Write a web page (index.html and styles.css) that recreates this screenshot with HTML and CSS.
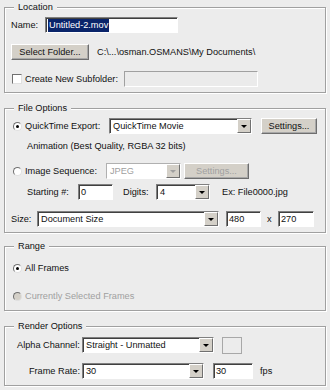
FILE: index.html
```html
<!DOCTYPE html>
<html>
<head>
    <title>Render Video</title>
    <link rel="stylesheet" href="styles.css">
</head>
<body>
    <div class="dialog">
        <!-- Location -->
        <fieldset class="group group-location">
            <legend>Location</legend>
            <div class="group-body">
                <div class="row">
                    <span class="lbl w-name">Name:</span>
                    <div class="field name-field"><span class="selected">Untitled-2.mov</span></div>
                </div>
                <div class="row">
                    <button class="btn folder-btn">Select Folder...</button>
                    <span class="path">C:\...\osman.OSMANS\My Documents\</span>
                </div>
                <div class="row">
                    <span class="check"></span>
                    <span class="lbl w-sub">Create New Subfolder:</span>
                    <div class="field disabled sub-field"></div>
                </div>
            </div>
        </fieldset>

        <!-- File Options -->
        <fieldset class="group group-file">
            <legend>File Options</legend>
            <div class="group-body">
                <div class="row">
                    <span class="radio checked"></span>
                    <span class="lbl w-qt">QuickTime Export:</span>
                    <div class="combo qt-combo"><span class="combo-text">QuickTime Movie</span><span class="combo-btn"></span></div>
                    <button class="btn qt-btn">Settings...</button>
                </div>
                <div class="row text-row">
                    <span class="note">Animation (Best Quality, RGBA 32 bits)</span>
                </div>
                <div class="row seq-row">
                    <span class="radio"></span>
                    <span class="lbl w-seq">Image Sequence:</span>
                    <div class="combo disabled jpeg-combo"><span class="combo-text">JPEG</span><span class="combo-btn"></span></div>
                    <button class="btn disabled seq-btn">Settings...</button>
                </div>
                <div class="row num-row">
                    <span class="lbl w-start">Starting #:</span>
                    <div class="field start-field">0</div>
                    <span class="lbl w-digits">Digits:</span>
                    <div class="combo digits-combo"><span class="combo-text">4</span><span class="combo-btn"></span></div>
                    <span class="example">Ex: File0000.jpg</span>
                </div>
                <div class="row size-row">
                    <span class="lbl w-size">Size:</span>
                    <div class="combo size-combo"><span class="combo-text">Document Size</span><span class="combo-btn"></span></div>
                    <div class="field dim-field width-field">480</div>
                    <span class="lbl w-x">x</span>
                    <div class="field dim-field height-field">270</div>
                </div>
            </div>
        </fieldset>

        <!-- Range -->
        <fieldset class="group group-range">
            <legend>Range</legend>
            <div class="group-body">
                <div class="opt">
                    <span class="radio checked"></span>
                    <span class="lbl">All Frames</span>
                </div>
                <div class="opt disabled">
                    <span class="radio"></span>
                    <span class="lbl">Currently Selected Frames</span>
                </div>
            </div>
        </fieldset>

        <!-- Render Options -->
        <fieldset class="group group-render">
            <legend>Render Options</legend>
            <div class="group-body">
                <div class="row">
                    <span class="lbl w-alpha">Alpha Channel:</span>
                    <div class="combo alpha-combo"><span class="combo-text">Straight - Unmatted</span><span class="combo-btn"></span></div>
                    <span class="swatch"></span>
                </div>
                <div class="row rate-row">
                    <span class="lbl w-alpha right">Frame Rate:</span>
                    <div class="combo rate-combo"><span class="combo-text">30</span><span class="combo-btn"></span></div>
                    <div class="field fps-field">30</div>
                    <span class="fps">fps</span>
                </div>
            </div>
        </fieldset>
    </div>
</body>
</html>
```

FILE: styles.css
```css
/* page */
body {
    margin: 0;
    width: 330px;
    height: 390px;
    overflow: hidden;
    background-color: #ececec;
    color: #111;
    font-family: "Liberation Sans", Arial, sans-serif;
    font-size: 9.2px;
    line-height: 13px;
}

.dialog {
    padding-top: 1px;
}

/* group boxes */
.group {
    margin: 0 4px 9px;
    padding: 3px 6px 5px;
    border: 1px solid #a0a0a0;
    box-shadow: inset 1px 1px 0 #fff, 1px 1px 0 #fff;
    min-width: 0;
}

.group legend {
    margin-left: 3px;
    padding: 0 4px;
    line-height: 13px;
    background-color: #ececec;
}

.group-body {
    display: flex;
    flex-direction: column;
}

.group-location .group-body { gap: 11px; }
.group-file { margin-bottom: 7px; }
.group-range { padding-top: 9px; padding-bottom: 7px; }
.group-range .group-body { gap: 15px; }
.group-render { padding-top: 4px; padding-bottom: 6px; margin-bottom: 0; }
.group-render .group-body { gap: 10px; }

/* rows */
.row {
    display: flex;
    align-items: center;
    height: 16px;
    white-space: nowrap;
}

.text-row { height: 14px; margin-top: 5px; padding-left: 16px; }
.seq-row { margin-top: 10px; }
.num-row { margin-top: 5px; padding-left: 16px; }
.size-row { margin-top: 11px; }

.opt {
    display: flex;
    align-items: center;
    height: 13px;
    white-space: nowrap;
}

.opt.disabled { color: #a0a0a0; }

.lbl { flex: none; }
.right { text-align: right; padding-right: 2px; box-sizing: border-box; }

.w-name { width: 34px; }
.w-sub { width: 99px; }
.w-qt { width: 84px; }
.w-seq { width: 81px; }
.w-start { width: 51px; }
.w-digits { width: 33px; margin-left: 10px; }
.w-size { width: 26px; }
.w-x { width: 11px; margin-left: 6px; }
.w-alpha { width: 65px; margin-left: 6px; }

/* text inputs */
.field {
    flex: none;
    box-sizing: border-box;
    height: 16px;
    padding: 0 2px;
    border: 1px solid;
    border-color: #808080 #fff #fff #808080;
    box-shadow: inset 1px 1px 0 #404040;
    background-color: #fff;
    line-height: 14px;
}

.field.disabled {
    background-color: #ebebeb;
    border-color: #a0a0a0 #fff #fff #a0a0a0;
    box-shadow: none;
}

.name-field { width: 133px; }
.sub-field { width: 134px; }
.start-field { width: 35px; }
.dim-field { width: 35px; }
.width-field { margin-left: 7px; }
.height-field { width: 36px; }
.fps-field { width: 40px; margin-left: 9px; }

.selected {
    display: inline-block;
    padding: 0 1px;
    background-color: #0a246a;
    color: #fff;
    line-height: 13px;
}

/* combo boxes */
.combo {
    flex: none;
    display: flex;
    box-sizing: border-box;
    height: 16px;
    border: 1px solid;
    border-color: #808080 #fff #fff #808080;
    box-shadow: inset 1px 1px 0 #404040;
    background-color: #fff;
}

.combo-text {
    flex: 1;
    padding-left: 3px;
    overflow: hidden;
    line-height: 14px;
}

.combo-btn {
    display: flex;
    align-items: center;
    justify-content: center;
    width: 14px;
    box-sizing: border-box;
    background-color: #d4d0c8;
    border: 1px solid;
    border-color: #fff #707070 #707070 #fff;
}

.combo-btn::after {
    content: "";
    border-left: 3px solid transparent;
    border-right: 3px solid transparent;
    border-top: 3px solid #000;
}

.combo.disabled { color: #a0a0a0; border-color: #b0b0b0 #fff #fff #b0b0b0; box-shadow: none; }
.combo.disabled .combo-btn::after { border-top-color: #a0a0a0; }

.qt-combo { width: 143px; }
.jpeg-combo { width: 75px; }
.digits-combo { width: 54px; }
.size-combo { width: 182px; }
.alpha-combo { width: 132px; }
.rate-combo { width: 122px; }

/* buttons */
.btn {
    flex: none;
    box-sizing: border-box;
    height: 16px;
    padding: 0;
    border: 1px solid;
    border-color: #fff #6e6e6e #6e6e6e #fff;
    box-shadow: inset -1px -1px 0 #a8a8a8;
    background-color: #d4d0c8;
    color: #111;
    font: inherit;
    line-height: 13px;
}

.btn.disabled { color: #a0a0a0; }

.folder-btn { width: 78px; }
.qt-btn { width: 56px; margin-left: 9px; }
.seq-btn { width: 65px; margin-left: 3px; }

.path { margin-left: 8px; }
.example { margin-left: 12px; }
.fps { margin-left: 7px; }

/* checkbox and radio */
.check {
    flex: none;
    width: 10px;
    height: 10px;
    margin: 0 3px 0 1px;
    box-sizing: border-box;
    border: 1px solid;
    border-color: #707070 #e0e0e0 #e0e0e0 #707070;
    background-color: #fff;
}

.radio {
    flex: none;
    display: flex;
    align-items: center;
    justify-content: center;
    width: 9px;
    height: 9px;
    margin: 0 3px 0 2px;
    box-sizing: border-box;
    border-radius: 50%;
    border: 1px solid;
    border-color: #707070 #e0e0e0 #e0e0e0 #707070;
    background-color: #fff;
}

.radio.checked::after {
    content: "";
    width: 3px;
    height: 3px;
    border-radius: 50%;
    background-color: #000;
}

.opt.disabled .radio { background-color: #d4d0c8; }

.swatch {
    flex: none;
    width: 20px;
    height: 17px;
    margin-left: 8px;
    box-sizing: border-box;
    border: 1px solid #a8a8a8;
    background-color: #ececec;
}
```
